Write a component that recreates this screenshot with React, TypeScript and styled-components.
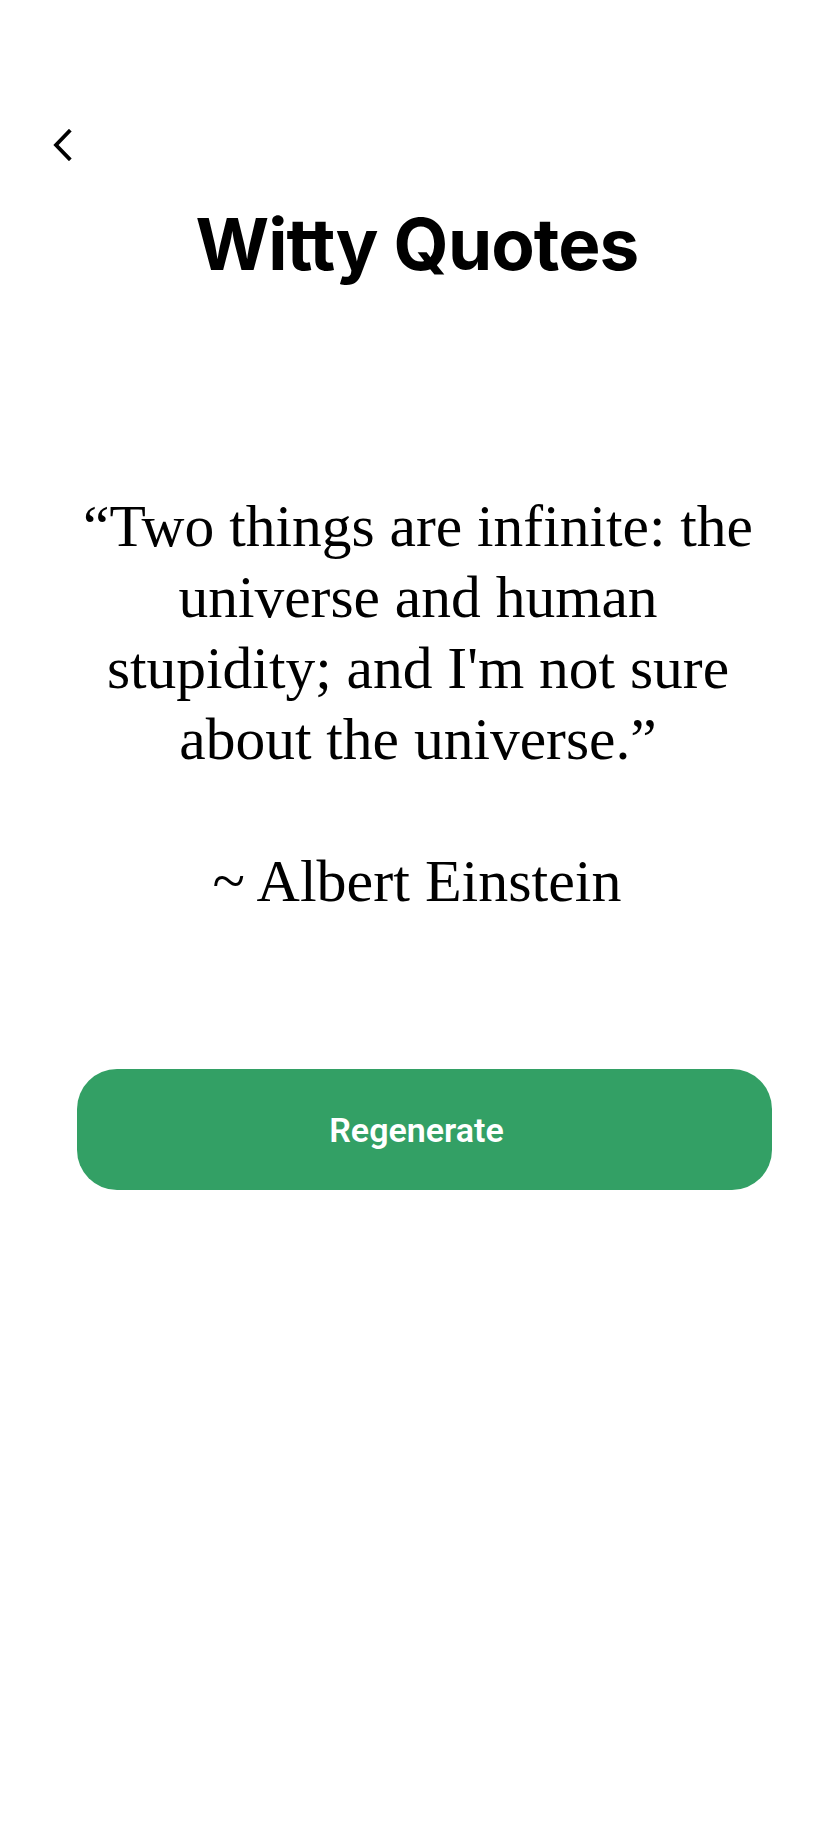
import React from "react";
import styled, { createGlobalStyle } from "styled-components";

const Global = createGlobalStyle`
  html, body { margin: 0; padding: 0; background: #ffffff; }
  * { box-sizing: border-box; }
`;

const Page = styled.div`
  width: 830px;
  min-height: 1824px;
  background: #ffffff;
  padding-top: 129px;
  display: flex;
  flex-direction: column;
`;

const BackButton = styled.button`
  align-self: flex-start;
  margin-left: 51px;
  padding: 0;
  border: none;
  background: transparent;
  width: 22px;
  height: 32px;
  display: flex;
  align-items: center;
  justify-content: center;
  cursor: pointer;
`;

const Title = styled.h1`
  margin: 39px 0 0;
  padding-left: 4px;
  text-align: center;
  font-family: Inter, "Noto Sans", sans-serif;
  font-weight: 700;
  font-size: 71px;
  line-height: 88px;
  letter-spacing: -0.9px;
  font-feature-settings: "liga" 0, "calt" 0;
  color: #000000;
`;

const Quote = styled.p`
  margin: 203px 0 0;
  padding: 0 36px 0 42px;
  text-align: center;
  font-family: "Liberation Serif", "Times New Roman", serif;
  font-size: 59.5px;
  line-height: 71px;
  color: #000000;
`;

const Author = styled.p`
  margin: 71px 0 0;
  padding-left: 4px;
  text-align: center;
  font-family: "Liberation Serif", "Times New Roman", serif;
  font-size: 60px;
  line-height: 71px;
  color: #000000;
`;

const Action = styled.button`
  margin: 152px 58px 0 77px;
  height: 121px;
  padding: 0 16px 0 0;
  border: none;
  border-radius: 40px;
  background: #33a065;
  color: #ffffff;
  font-family: Roboto, "Noto Sans", sans-serif;
  font-weight: 600;
  font-size: 34px;
  cursor: pointer;
`;

export default function App() {
  return (
    <>
      <Global />
      <Page>
        <BackButton aria-label="Back">
          <svg width="22" height="32" viewBox="0 0 22 32" fill="none">
            <polyline
              points="18,2.5 5,16 18,29.5"
              stroke="#000"
              strokeWidth="3.8"
              strokeLinecap="square"
              strokeLinejoin="miter"
            />
          </svg>
        </BackButton>
        <Title>Witty Quotes</Title>
        <Quote>
          “Two things are infinite: the
          <br />
          universe and human
          <br />
          stupidity; and I'm not sure
          <br />
          about the universe.”
        </Quote>
        <Author>~ Albert Einstein</Author>
        <Action>Regenerate</Action>
      </Page>
    </>
  );
}
